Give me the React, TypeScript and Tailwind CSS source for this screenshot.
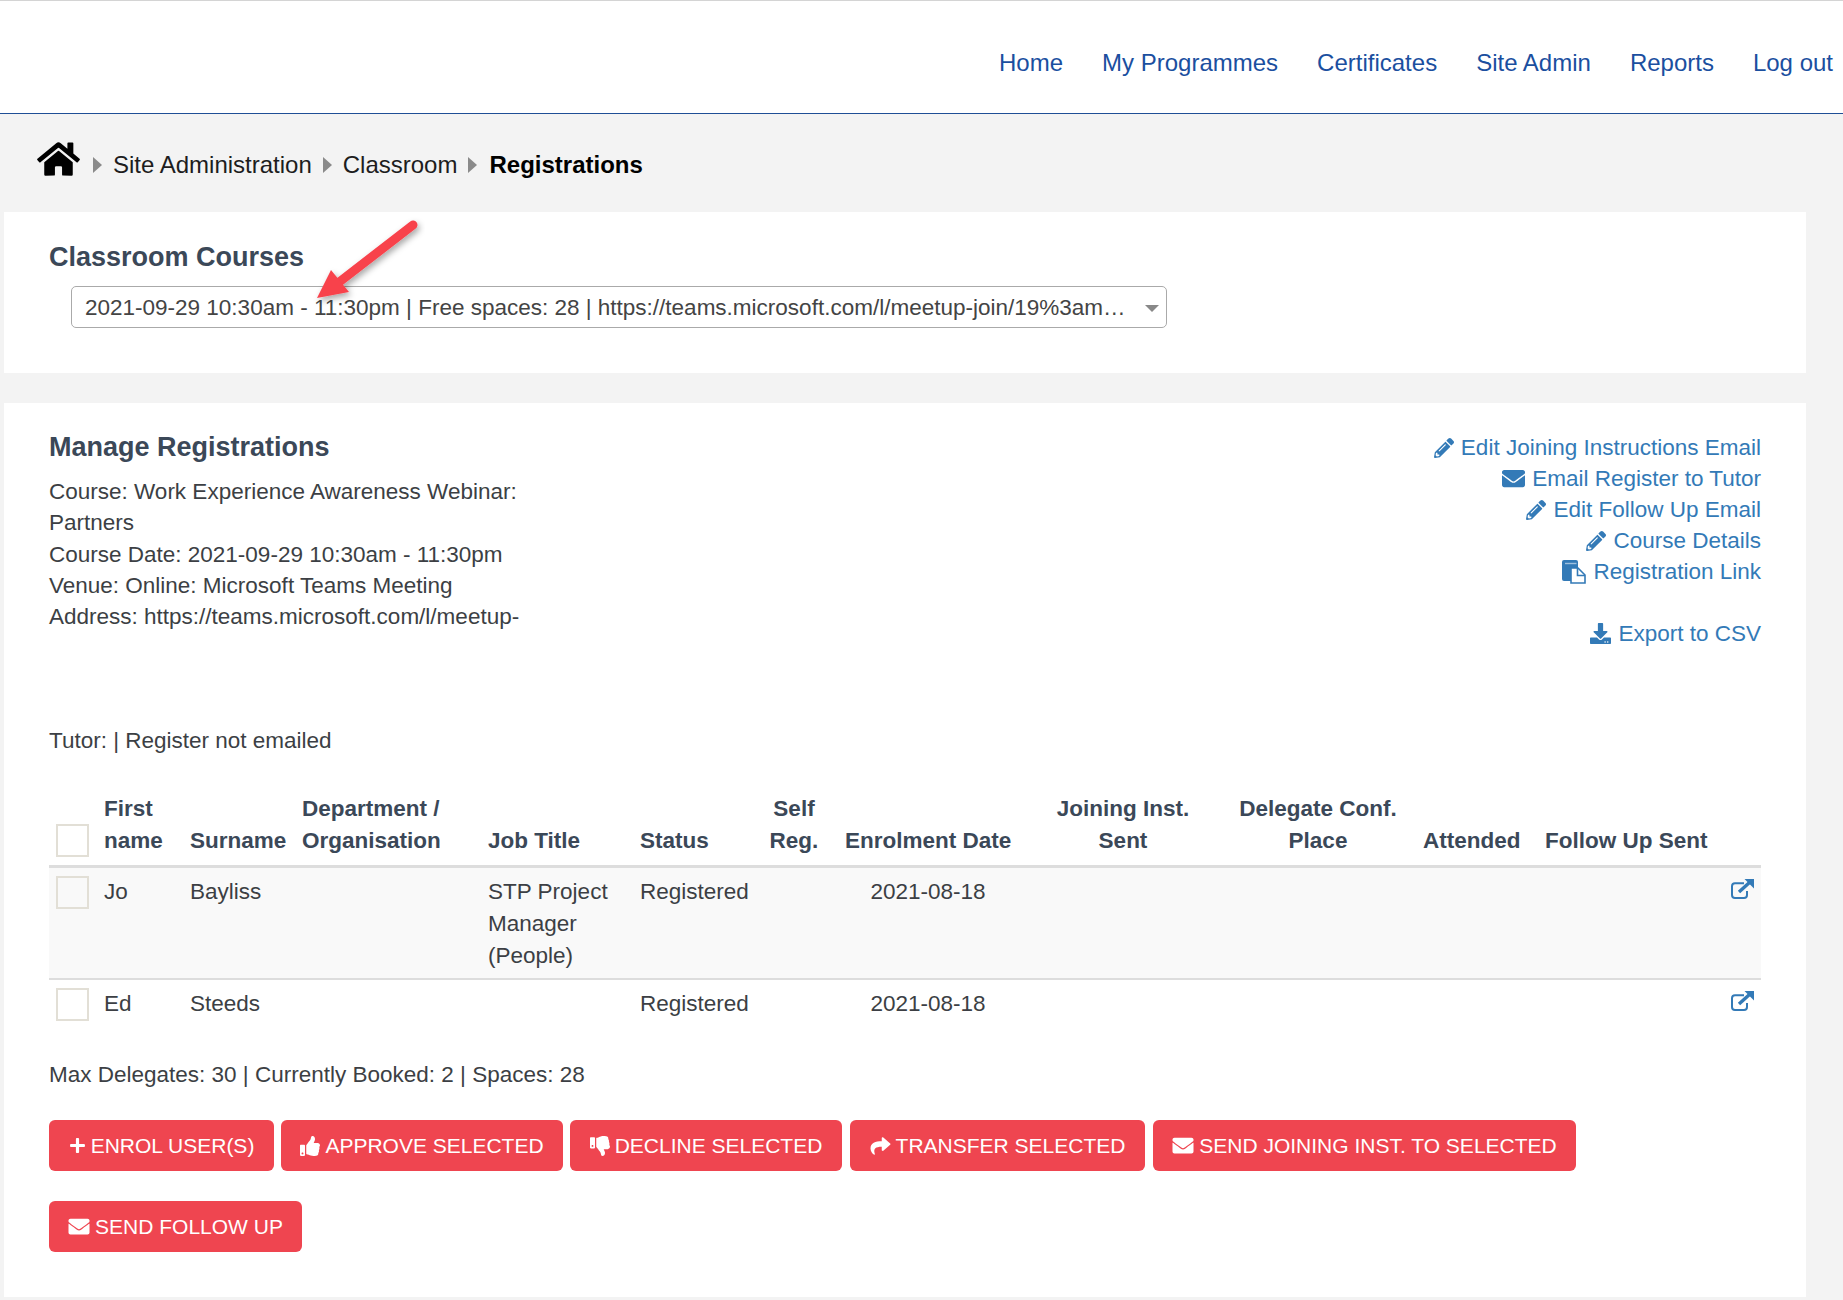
import React from "react";
import { FaHome, FaPencilAlt, FaEnvelope, FaDownload, FaPlus, FaThumbsUp, FaThumbsDown, FaShare } from "react-icons/fa";

const font = { fontFamily: '"Liberation Sans", Arial, sans-serif' };

function ExternalIcon() {
  return (
    <svg viewBox="0 0 24 20" className="h-[20px] w-[24px] text-[#337ab7]" fill="none">
      <path d="M14 4.2H5a3 3 0 0 0-3 3V16a3 3 0 0 0 3 3h9a3 3 0 0 0 3-3v-4" stroke="currentColor" strokeWidth="2" />
      <path d="M9 13 L19.5 3.5" stroke="currentColor" strokeWidth="3.4" />
      <path d="M14.5 0H24V9.5Z" fill="currentColor" />
    </svg>
  );
}

function DuplicateIcon() {
  return (
    <svg viewBox="0 0 24 24" className="h-[24px] w-[24px] text-[#337ab7]" fill="none">
      <path d="M2 0h12a2 2 0 0 1 2 2v19H2a2 2 0 0 1-2-2V2a2 2 0 0 1 2-2Z" fill="currentColor" />
      <path d="M3 3.5H14.5" stroke="#9fc0de" strokeWidth="1.4" />
      <path d="M9 8h7l7 7v8H9Z" fill="#ffffff" stroke="currentColor" strokeWidth="1.6" />
      <path d="M15.5 8v7.5H23" stroke="currentColor" strokeWidth="1.6" />
    </svg>
  );
}

function Caret() {
  return <span className="h-0 w-0 border-y-[8px] border-l-[9px] border-y-transparent border-l-[#8a8a8a]" />;
}

function Check() {
  return <div className="ml-[7px] h-[33px] w-[33px] border-2 border-[#e2dfd6]" />;
}

function Btn({ icon, children, className }: { icon: React.ReactNode; children: React.ReactNode; className: string }) {
  return (
    <div className={`flex h-[51px] items-center justify-center gap-[5px] rounded-[6px] bg-[#ef4550] text-[21px] text-white ${className}`}>
      {icon}
      <span>{children}</span>
    </div>
  );
}

function LinkRow({ icon, children, className = "" }: { icon: React.ReactNode; children: React.ReactNode; className?: string }) {
  return (
    <div className={`flex h-[31px] items-center justify-end gap-[7px] text-[#337ab7] ${className}`}>
      {icon}
      <span>{children}</span>
    </div>
  );
}

export default function App() {
  return (
    <div style={font} className="relative h-[1300px] w-[1843px] overflow-hidden bg-[#f3f3f3] text-[22.5px] leading-[31.36px] text-[#3c3f44]">
      <header className="flex h-[114px] items-start justify-end gap-[39px] border-t border-b border-t-[#d4d4d4] border-b-[#1f4e96] bg-white pr-[10px] pt-[47px] text-[24px] leading-[30px] text-[#1b4f9f]">
        <span>Home</span>
        <span>My Programmes</span>
        <span>Certificates</span>
        <span>Site Admin</span>
        <span>Reports</span>
        <span>Log out</span>
      </header>

      <nav className="flex h-[98px] items-center gap-[11px] pl-[37px] pt-[3px] text-[24px] text-[#1d1d1d]">
        <FaHome className="mb-[11px] mr-[2px] h-[38px] w-[43px] text-black" />
        <Caret />
        <span>Site Administration</span>
        <Caret />
        <span>Classroom</span>
        <Caret />
        <span className="ml-[1px] font-bold text-black">Registrations</span>
      </nav>

      <section className="ml-[4px] h-[161px] w-[1802px] bg-white pl-[45px] pt-[29px]">
        <h2 className="text-[27px] font-bold leading-[32px] text-[#3b4858]">Classroom Courses</h2>
        <div className="ml-[22px] mt-[13px] flex h-[42px] w-[1096px] items-center rounded-[5px] border border-[#aaaaaa] bg-white pl-[13px] pt-[2px] text-[#444]">
          <span className="w-[1041px] truncate whitespace-nowrap">2021-09-29 10:30am - 11:30pm | Free spaces: 28 | https://teams.microsoft.com/l/meetup-join/19%3ameeting</span>
          <span className="ml-[19px] h-0 w-0 border-x-[7px] border-t-[7px] border-x-transparent border-t-[#888]" />
        </div>
      </section>

      <section className="ml-[4px] mt-[30px] h-[894px] w-[1802px] bg-white pl-[45px] pr-[45px] pt-[28px]">
        <div className="flex h-[362px] justify-between">
          <div className="w-[480px]">
            <h2 className="mb-[13px] text-[27px] font-bold leading-[32px] text-[#3b4858]">Manage Registrations</h2>
            <p>Course: Work Experience Awareness Webinar: Partners</p>
            <p>Course Date: 2021-09-29 10:30am - 11:30pm</p>
            <p>Venue: Online: Microsoft Teams Meeting</p>
            <p className="whitespace-nowrap">Address: https://teams.microsoft.com/l/meetup-</p>
            <p className="mt-[92px]">Tutor: | Register not emailed</p>
          </div>
          <div className="pt-[1px]">
            <LinkRow icon={<FaPencilAlt className="h-[20px] w-[20px]" />}>Edit Joining Instructions Email</LinkRow>
            <LinkRow icon={<FaEnvelope className="h-[23px] w-[23px]" />}>Email Register to Tutor</LinkRow>
            <LinkRow icon={<FaPencilAlt className="h-[20px] w-[20px]" />}>Edit Follow Up Email</LinkRow>
            <LinkRow icon={<FaPencilAlt className="h-[20px] w-[20px]" />}>Course Details</LinkRow>
            <LinkRow icon={<DuplicateIcon />}>Registration Link</LinkRow>
            <LinkRow className="mt-[31px]" icon={<FaDownload className="h-[21px] w-[21px]" />}>Export to CSV</LinkRow>
          </div>
        </div>

        <table className="w-[1712px] table-fixed border-collapse text-[22.5px] leading-[32px]">
          <colgroup>
            <col className="w-[42px]" />
            <col className="w-[86px]" />
            <col className="w-[112px]" />
            <col className="w-[186px]" />
            <col className="w-[152px]" />
            <col className="w-[133px]" />
            <col className="w-[72px]" />
            <col className="w-[192px]" />
            <col className="w-[198px]" />
            <col className="w-[188px]" />
            <col className="w-[122px]" />
            <col className="w-[229px]" />
          </colgroup>
          <thead>
            <tr className="border-b-[3px] border-[#dddddd] text-left align-bottom font-bold text-[#3b4858] [&>th]:px-[13px] [&>th]:pb-[8px]">
              <th className="!px-0"><Check /></th>
              <th>First name</th>
              <th>Surname</th>
              <th>Department / Organisation</th>
              <th>Job Title</th>
              <th>Status</th>
              <th className="!pl-0 !pr-[4px] text-center">Self Reg.</th>
              <th className="whitespace-nowrap">Enrolment Date</th>
              <th className="text-center">Joining Inst. Sent</th>
              <th className="!pl-[15px] !pr-[11px] text-center">Delegate Conf. Place</th>
              <th>Attended</th>
              <th className="whitespace-nowrap">Follow Up Sent</th>
            </tr>
          </thead>
          <tbody>
            <tr className="border-b-2 border-[#dddddd] bg-[#f9f9f9] align-top [&>td]:px-[13px] [&>td]:pb-[6px] [&>td]:pt-[8px]">
              <td className="!px-0"><Check /></td>
              <td>Jo</td>
              <td>Bayliss</td>
              <td></td>
              <td>STP Project Manager (People)</td>
              <td>Registered</td>
              <td></td>
              <td className="text-center">2021-08-18</td>
              <td></td>
              <td></td>
              <td></td>
              <td className="!pr-[7px]"><div className="mt-[3px] flex justify-end"><ExternalIcon /></div></td>
            </tr>
            <tr className="align-top [&>td]:px-[13px] [&>td]:py-[8px]">
              <td className="!px-0"><Check /></td>
              <td>Ed</td>
              <td>Steeds</td>
              <td></td>
              <td></td>
              <td>Registered</td>
              <td></td>
              <td className="text-center">2021-08-18</td>
              <td></td>
              <td></td>
              <td></td>
              <td className="!pr-[7px]"><div className="mt-[3px] flex justify-end"><ExternalIcon /></div></td>
            </tr>
          </tbody>
        </table>

        <p className="mt-[30px]">Max Delegates: 30 | Currently Booked: 2 | Spaces: 28</p>

        <div className="mt-[30px] flex gap-[7px]">
          <Btn className="w-[225px]" icon={<FaPlus className="h-[17px] w-[17px]" />}>ENROL USER(S)</Btn>
          <Btn className="w-[282px]" icon={<FaThumbsUp className="h-[20px] w-[20px]" />}>APPROVE SELECTED</Btn>
          <Btn className="w-[272px]" icon={<FaThumbsDown className="h-[20px] w-[20px]" />}>DECLINE SELECTED</Btn>
          <Btn className="ml-[1px] w-[295px]" icon={<FaShare className="h-[20px] w-[21px]" />}>TRANSFER SELECTED</Btn>
          <Btn className="ml-[1px] w-[423px]" icon={<FaEnvelope className="h-[21px] w-[22px]" />}>SEND JOINING INST. TO SELECTED</Btn>
        </div>
        <div className="mt-[30px] flex">
          <Btn className="w-[253px]" icon={<FaEnvelope className="h-[21px] w-[22px]" />}>SEND FOLLOW UP</Btn>
        </div>
      </section>

      <svg className="pointer-events-none absolute left-[310px] top-[212px] h-[95px] w-[115px]" viewBox="310 212 115 95">
        <defs>
          <filter id="s" x="-20%" y="-20%" width="150%" height="150%">
            <feDropShadow dx="2" dy="3" stdDeviation="3" floodColor="#000" floodOpacity="0.35" />
          </filter>
        </defs>
        <g filter="url(#s)">
          <path d="M413 225 L338 283" stroke="#f8424c" strokeWidth="9" strokeLinecap="round" />
          <path d="M317 298 L331 270 L349 292 Z" fill="#f8424c" />
        </g>
      </svg>
    </div>
  );
}
